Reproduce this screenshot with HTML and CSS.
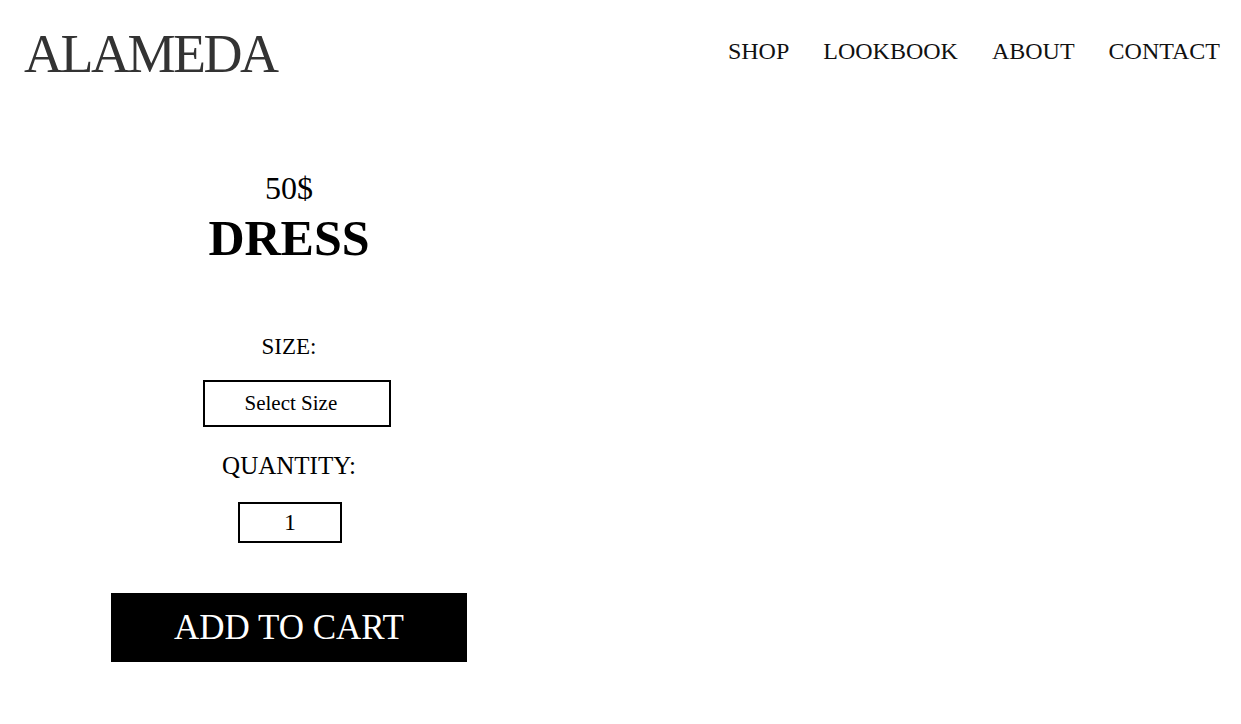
FILE: index.html
```html
<!DOCTYPE html>
<html lang="en">
<head>
<meta charset="utf-8">
<title>Alameda - Dress</title>
<link rel="stylesheet" href="styles.css">
</head>
<body>
<header class="site-header">
  <div class="logo">ALAMEDA</div>
  <nav class="nav">
    <a href="#">SHOP</a>
    <a href="#">LOOKBOOK</a>
    <a href="#">ABOUT</a>
    <a href="#">CONTACT</a>
  </nav>
</header>
<main class="product">
  <section class="details">
    <div class="price">50$</div>
    <h1 class="title">DRESS</h1>
    <div class="label size-label">SIZE:</div>
    <div class="select-box">Select Size</div>
    <div class="label qty-label">QUANTITY:</div>
    <div class="qty-box">1</div>
    <button class="cart-btn">ADD TO CART</button>
  </section>
</main>
</body>
</html>
```
FILE: styles.css
```css
html, body {
  margin: 0;
  padding: 0;
  background: #fff;
  color: #000;
  font-family: "Liberation Serif", "Times New Roman", serif;
}
.site-header {
  display: flex;
  justify-content: space-between;
  align-items: flex-start;
  padding: 22px 21px 0 24px;
  height: 98px;
  box-sizing: border-box;
}
.logo {
  font-size: 54px;
  line-height: 64px;
  color: #333;
  letter-spacing: -2.5px;
}
.nav {
  display: flex;
  gap: 34px;
  padding-top: 14px;
}
.nav a {
  font-size: 24px;
  line-height: 30px;
  color: #111;
  text-decoration: none;
}
.product {
  display: flex;
}
.details {
  width: 578px;
  display: flex;
  flex-direction: column;
  align-items: center;
  padding-top: 72px;
}
.price {
  font-size: 32px;
  line-height: 36px;
}
.title {
  margin: 4px 0 0;
  font-size: 50px;
  line-height: 56px;
  font-weight: bold;
}
.label {
  font-size: 23px;
  line-height: 30px;
}
.size-label {
  margin-top: 66px;
}
.select-box {
  margin-top: 18px;
  margin-left: 15px;
  width: 188px;
  height: 47px;
  box-sizing: border-box;
  border: 2px solid #000;
  display: flex;
  align-items: center;
  padding-left: 40px;
  font-size: 21px;
}
.qty-label {
  margin-top: 24px;
  font-size: 25px;
}
.qty-box {
  margin-top: 21px;
  margin-left: 2px;
  width: 104px;
  height: 41px;
  box-sizing: border-box;
  border: 2px solid #000;
  display: flex;
  align-items: center;
  justify-content: center;
  font-size: 24px;
}
.cart-btn {
  margin-top: 50px;
  width: 356px;
  height: 69px;
  background: #000;
  color: #fff;
  border: none;
  font-family: "Liberation Serif", "Times New Roman", serif;
  font-size: 35px;
  padding: 0;
}
```
